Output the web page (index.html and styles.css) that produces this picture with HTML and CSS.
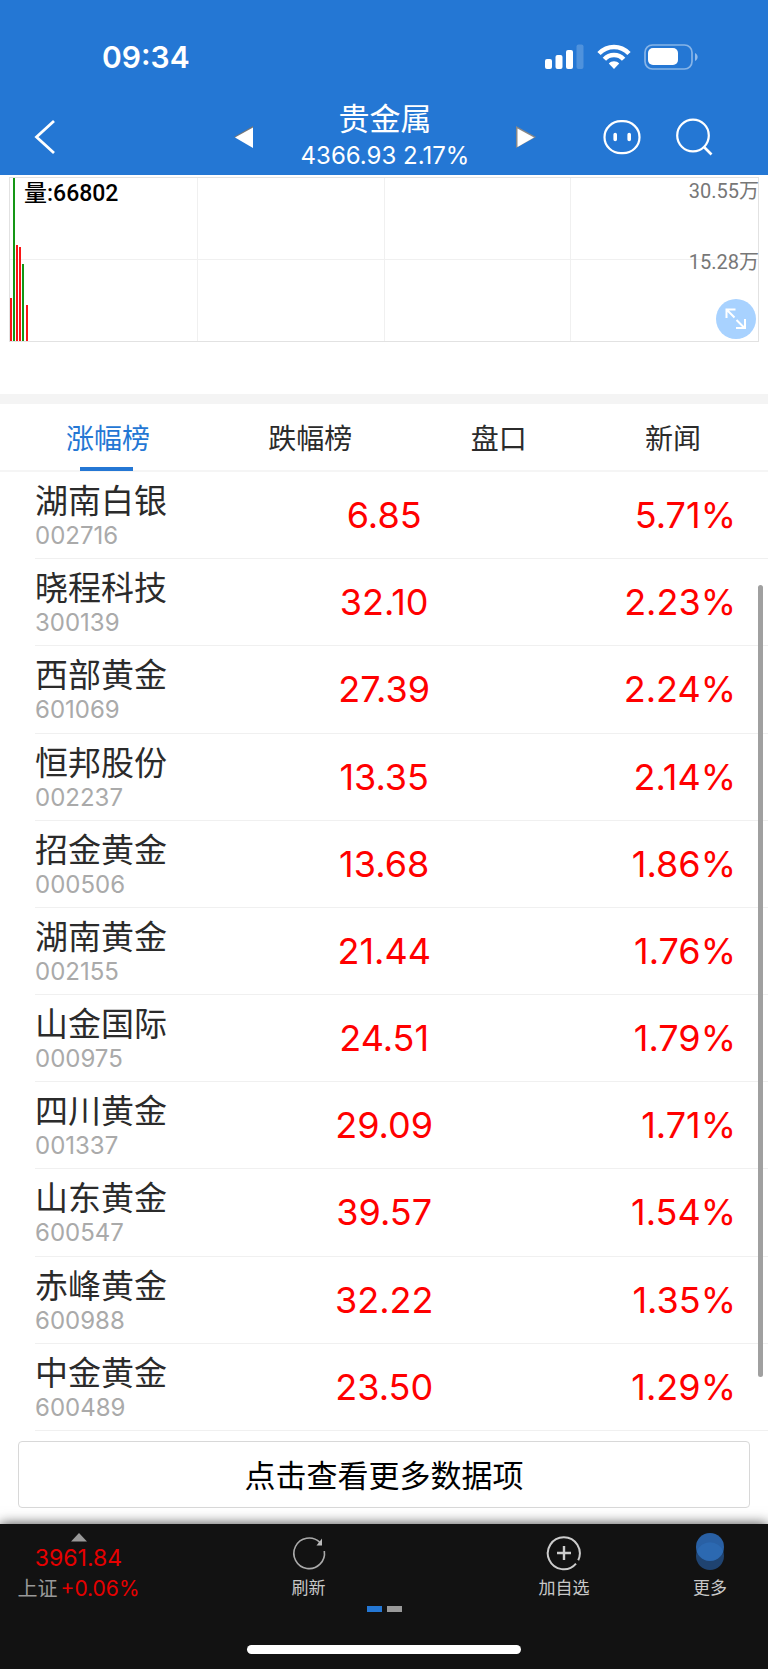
FILE: index.html
```html
<!DOCTYPE html>
<html lang="zh-CN">
<head>
<meta charset="utf-8">
<meta name="viewport" content="width=device-width, initial-scale=1">
<title>贵金属</title>
<link rel="stylesheet" href="styles.css">
</head>
<body>
<header class="top">
  <div class="status">
    <time class="clock">09:34</time>
    <div class="status-icons">
      <svg width="39" height="26" viewBox="0 0 39 26" fill="#fff"><rect y="15" width="7" height="10" rx="2"/><rect x="10.500" y="11" width="7" height="14" rx="2"/><rect x="21" y="6" width="7" height="19" rx="2"/><rect x="31.500" y="0.500" width="7" height="24.500" rx="2" opacity=".2"/></svg>
      <svg width="34" height="26" viewBox="0 0 34 26" fill="none" stroke="#fff" stroke-width="4.600"><path d="M2 9.500C10.500 0.800 23.500 0.800 32 9.500"/><path d="M7.400 15.200C12.500 9.600 21.500 9.600 26.600 15.200"/><path d="M17 25L11.800 19.600C14.500 16.600 19.500 16.600 22.200 19.600Z" fill="#fff" stroke="none"/></svg>
      <svg width="54" height="26" viewBox="0 0 54 26"><rect x="1" y="1" width="47" height="24" rx="7.500" fill="none" stroke="#fff" stroke-width="1.700" opacity=".45"/><rect x="4" y="4" width="30" height="17" rx="5" fill="#fff"/><path d="M51 9C54.500 10.500 54.500 15.500 51 17Z" fill="#fff" opacity=".5"/></svg>
    </div>
  </div>
  <nav class="nav">
    <button class="icon-btn back" aria-label="返回"><svg width="22" height="36" viewBox="0 0 22 36" fill="none" stroke="#fff" stroke-width="2.800"><path d="M20 2L2.500 18L20 34"/></svg></button>
    <div class="switcher">
      <button class="icon-btn" aria-label="上一个"><svg width="20" height="22" viewBox="0 0 20 22"><path d="M0 11L19 0V3L3 12Z" fill="#777"/><path d="M1 11.500L19 1.500V22Z" fill="#fff"/></svg></button>
      <div class="heading">
        <h1 class="title">贵金属</h1>
        <p class="quote">4366.93 2.17%</p>
      </div>
      <button class="icon-btn" aria-label="下一个"><svg width="20" height="22" viewBox="0 0 20 22"><path d="M0 0L20 11L0 22Z" fill="#888"/><path d="M1.500 2.500L18 11.500L1.500 21Z" fill="#fff"/></svg></button>
    </div>
    <div class="actions">
      <button class="icon-btn" aria-label="助手"><svg width="38" height="36" viewBox="0 0 38 36" fill="none" stroke="#fff"><rect x="1.500" y="2.200" width="35" height="32" rx="16.500" ry="16" stroke-width="2.200"/><path d="M12.200 15.500V20.500M26.200 15.500V20.500" stroke-width="3.600" stroke-linecap="round"/></svg></button>
      <button class="icon-btn" aria-label="搜索"><svg width="37" height="38" viewBox="0 0 37 38" fill="none" stroke="#fff" stroke-width="2.200"><circle cx="17" cy="17.500" r="15.800"/><path d="M28 29L35.500 36.500" stroke-width="2.600"/></svg></button>
    </div>
  </nav>
</header>

<main>
  <section class="chart">
    <div class="plot">
      <span class="volume">量:66802</span>
      <div class="bars">
        <i class="bar up" style="height:43px"></i><i class="bar down" style="height:163px"></i><i class="bar up" style="height:96px"></i><i class="bar up" style="height:94px"></i><i class="bar down" style="height:77px"></i><i class="bar up" style="height:36px"></i>
      </div>
      <div class="scale"><span>30.55万</span><span>15.28万</span></div>
      <button class="expand" aria-label="全屏"><svg width="40" height="40" viewBox="0 0 40 40" fill="none" stroke="#fff" stroke-width="2"><path d="M10.500 19V10.500H19.500M10.500 10.500L18.500 18.500M20.500 21L28.500 29M29 20V29H20"/></svg></button>
    </div>
  </section>

  <div class="tabs" role="tablist">
    <button class="tab active" role="tab" aria-selected="true">涨幅榜</button>
    <button class="tab" role="tab" aria-selected="false">跌幅榜</button>
    <button class="tab" role="tab" aria-selected="false">盘口</button>
    <button class="tab" role="tab" aria-selected="false">新闻</button>
  </div>

  <section class="list">
    <table class="stocks">
      <colgroup><col><col class="col"><col class="col"></colgroup>
      <tbody>
        <tr><th scope="row">湖南白银<small>002716</small></th><td>6.85</td><td>5.71%</td></tr>
        <tr><th scope="row">晓程科技<small>300139</small></th><td>32.10</td><td>2.23%</td></tr>
        <tr><th scope="row">西部黄金<small>601069</small></th><td>27.39</td><td>2.24%</td></tr>
        <tr><th scope="row">恒邦股份<small>002237</small></th><td>13.35</td><td>2.14%</td></tr>
        <tr><th scope="row">招金黄金<small>000506</small></th><td>13.68</td><td>1.86%</td></tr>
        <tr><th scope="row">湖南黄金<small>002155</small></th><td>21.44</td><td>1.76%</td></tr>
        <tr><th scope="row">山金国际<small>000975</small></th><td>24.51</td><td>1.79%</td></tr>
        <tr><th scope="row">四川黄金<small>001337</small></th><td>29.09</td><td>1.71%</td></tr>
        <tr><th scope="row">山东黄金<small>600547</small></th><td>39.57</td><td>1.54%</td></tr>
        <tr><th scope="row">赤峰黄金<small>600988</small></th><td>32.22</td><td>1.35%</td></tr>
        <tr><th scope="row">中金黄金<small>600489</small></th><td>23.50</td><td>1.29%</td></tr>
      </tbody>
    </table>
    <div class="thumb"></div>
  </section>
  <button class="more">点击查看更多数据项</button>
</main>

<footer class="bottom">
  <div class="tools">
    <button class="tool index">
      <svg width="16" height="9" viewBox="0 0 16 9"><path d="M8 0L16 8.500H0Z" fill="#999"/></svg>
      <span class="rise">3961.84</span>
      <span class="market">上证 <span class="rise">+0.06%</span></span>
    </button>
    <button class="tool">
      <svg width="36" height="36" viewBox="0 0 36 36" fill="none" stroke="#aaa" stroke-width="1.600"><path d="M28.800 7.300A15.300 15.300 0 1 0 33.300 16"/><path d="M31 3.500V10.500H25.500Z" fill="#bbb" stroke="none"/></svg>
      刷新
    </button>
    <button class="tool">
      <svg width="36" height="36" viewBox="0 0 36 36" fill="none" stroke="#ccc" stroke-width="2"><path d="M32.200 25.200A16 16 0 1 0 30 28.600"/><path d="M18 11V25M11 18H25" stroke-width="2.400"/></svg>
      加自选
    </button>
    <button class="tool">
      <svg width="36" height="38" viewBox="0 0 36 38"><circle cx="18" cy="23" r="14" fill="#1f4370"/><circle cx="18" cy="14" r="14" fill="#2960a4"/><path d="M4.800 18.500A14 14 0 0 1 31.200 18.500A14 14 0 0 1 4.800 18.500Z" fill="#2c69b1"/></svg>
      更多
    </button>
  </div>
  <div class="pager"><i class="dot on"></i><i class="dot"></i></div>
  <div class="home"></div>
</footer>
</body>
</html>
```
FILE: styles.css
```css
* { box-sizing: border-box; }
body {
  margin: 0;
  background: #fff;
  color: #2b2b2b;
  font-family: Inter, "Noto Sans CJK SC", sans-serif;
}
button {
  padding: 0;
  border: 0;
  background: none;
  color: inherit;
  font: inherit;
}
svg { display: block; }

.top {
  height: 175px;
  background: #2477d4;
  color: #fff;
}
.status {
  display: flex;
  align-items: center;
  justify-content: space-between;
  height: 100px;
  padding: 14px 70px 0 102px;
}
.clock { font-size: 30px; font-weight: 600; }
.status-icons { display: flex; gap: 13px; }
.nav {
  display: grid;
  grid-template-columns: 1fr 304px 1fr;
  align-items: center;
  height: 72px;
}
.back { margin-left: 34px; justify-self: start; }
.switcher {
  display: flex;
  align-items: center;
  justify-content: space-between;
  padding-left: 2px;
}
.heading { text-align: center; }
.title { margin: 0; font-size: 31px; font-weight: 400; line-height: 38px; }
.quote { margin: 0; font-size: 24px; font-weight: 400; line-height: 36px; }
.actions {
  display: flex;
  align-items: center;
  justify-content: flex-end;
  gap: 35px;
  padding-right: 55px;
}

.chart {
  padding: 2px 9px 52px;
  border-bottom: 10px solid #f4f4f4;
}
.plot {
  position: relative;
  display: flex;
  align-items: flex-end;
  height: 165px;
  border: 1px solid #e2e2e2;
  background:
    linear-gradient(#f0f0f0, #f0f0f0) 25% 0 / 1px 100% no-repeat,
    linear-gradient(#f0f0f0, #f0f0f0) 50% 0 / 1px 100% no-repeat,
    linear-gradient(#f0f0f0, #f0f0f0) 75% 0 / 1px 100% no-repeat,
    linear-gradient(#f0f0f0, #f0f0f0) 0 50% / 100% 1px no-repeat;
}
.bars { display: flex; align-items: flex-end; gap: 1px; }
.bar { width: 2px; }
.bar.up { background: #fa1414; }
.bar.down { background: #159615; }
.bar:last-child { margin-left: 1px; }
.volume {
  position: absolute;
  top: 0;
  left: 14px;
  color: #000;
  font: 500 23px/32px Roboto, "Noto Sans CJK SC", sans-serif;
}
.scale {
  position: absolute;
  top: -1px;
  right: -1px;
  display: grid;
  row-gap: 43px;
  color: #777;
  font: 20px/28px Roboto, "Noto Sans CJK SC", sans-serif;
}
.expand {
  position: absolute;
  right: 2px;
  bottom: 2px;
  border-radius: 50%;
  background: #a8d2ff;
}

.tabs {
  display: flex;
  justify-content: space-between;
  padding: 0 67px 0 66px;
  border-bottom: 2px solid #f5f5f5;
}
.tab {
  position: relative;
  padding-top: 4px;
  font-size: 28px;
  font-weight: 400;
  line-height: 62px;
}
.tab.active { color: #2477d4; }
.tab.active::after {
  content: "";
  position: absolute;
  bottom: -1px;
  left: 14px;
  width: 53px;
  height: 4px;
  background: #2477d4;
}

.list { position: relative; padding-left: 35px; }
.stocks {
  width: 100%;
  height: 959px;
  table-layout: fixed;
  border-collapse: separate;
  border-spacing: 0;
}
.col { width: 35%; }
.stocks th, .stocks td {
  padding: 0;
  border-bottom: 1px solid #f0f0f0;
}
.stocks th {
  font-size: 33px;
  font-weight: 400;
  line-height: 42px;
  text-align: left;
}
.stocks small {
  display: block;
  color: #aaa;
  font-size: 24px;
  line-height: 28px;
}
.stocks td {
  padding-left: 2px;
  color: #f00;
  font-size: 36px;
  text-align: center;
}
.stocks td:last-child { padding-right: 32px; text-align: right; }
.thumb {
  position: absolute;
  top: 113px;
  right: 5px;
  bottom: 54px;
  width: 5px;
  border-radius: 3px;
  background: #a0a0a0;
}
.more {
  display: block;
  width: calc(100% - 36px);
  height: 67px;
  margin: 10px 18px 16px;
  padding-bottom: 2px;
  border: 1px solid #d8d8d8;
  border-radius: 4px;
  color: #000;
  font-size: 31px;
}

.bottom {
  height: 145px;
  background: #121212;
  box-shadow: 0 0 12px #444;
  color: #c8c8c8;
}
.tools {
  display: grid;
  grid-template-columns: 157fr 303fr 208fr 84fr;
  height: 82px;
  padding-right: 16px;
}
.tool {
  display: flex;
  flex-direction: column;
  align-items: center;
  justify-content: flex-end;
  gap: 5px;
  font-size: 17px;
  line-height: 24px;
  padding-bottom: 6px;
}
.index {
  gap: 1px;
  padding-bottom: 2px;
  font-size: 23px;
  line-height: 30px;
}
.market { display: flex; gap: 3px; color: #999; font-size: 20px; }
.market .rise { font-size: 21px; }
.rise { color: #e60000; }
.pager { display: flex; justify-content: center; gap: 5px; }
.dot { width: 15px; height: 6px; background: #999; }
.dot.on { background: #2477d4; }
.home {
  width: 274px;
  height: 9px;
  margin: 33px auto 0;
  border-radius: 5px;
  background: #fff;
}
```
